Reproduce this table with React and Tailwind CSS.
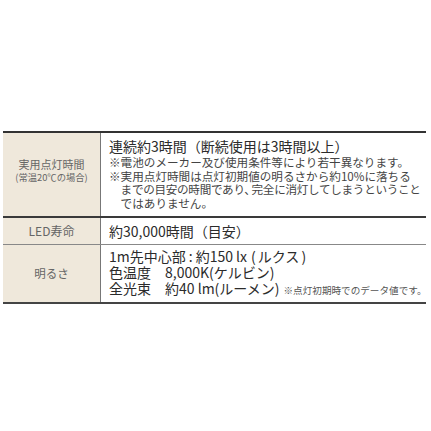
export default function App() {
  const jp = { fontFamily: '"Noto Sans CJK JP", "Noto Sans", sans-serif' };
  return (
    <div className="w-[431px] h-[431px] bg-white pt-[131px] pl-[3px]" style={jp}>
      <div className="w-[423px] border-t-2 border-b-2 border-t-[#333] border-b-[#444]">
        {/* Row 1 */}
        <div className="flex h-[83px]">
          <div className="w-[98px] shrink-0 bg-[#efe8db] border-r border-[#777] flex flex-col items-center justify-center text-[#666] text-center">
            <div className="mb-[8px]">
              <div className="text-[11px] leading-[13px]">実用点灯時間</div>
              <div className="text-[9.3px] leading-[13px] whitespace-nowrap">(常温20℃の場合)</div>
            </div>
          </div>
          <div className="flex-1 pl-[8px] pt-[4px] text-[#2b2b2b]">
            <div className="text-[14px] leading-[18px] whitespace-nowrap">連続約3時間（断続使用は3時間以上）</div>
            <div className="text-[11.6px] leading-[13.5px] mt-[1px] text-[#444] whitespace-nowrap">
              <div>※電池のメーカー及び使用条件等により若干異なります。</div>
              <div>※実用点灯時間は点灯初期値の明るさから約10%に落ちる</div>
              <div className="pl-[11.6px] tracking-[-0.3px]">
                までの目安の時間であり<span className="-mr-[4px]">、</span>完全に消灯してしまうということ
              </div>
              <div className="pl-[11.6px]">ではありません。</div>
            </div>
          </div>
        </div>
        {/* Row 2 */}
        <div className="flex h-[28px] border-t-2 border-[#3a3a3a]">
          <div className="w-[98px] shrink-0 bg-[#efe8db] border-r border-[#777] flex items-center justify-center text-[#666] text-[12px]">
            LED寿命
          </div>
          <div className="flex-1 pl-[8px] flex items-center text-[14px] text-[#2b2b2b] whitespace-nowrap">
            約30,000時間（目安）
          </div>
        </div>
        {/* Row 3 */}
        <div className="flex h-[58px] border-t border-[#888]">
          <div className="w-[98px] shrink-0 bg-[#efe8db] border-r border-[#777] flex items-center justify-center text-[#666] text-[11.5px]">
            明るさ
          </div>
          <div className="flex-1 pl-[8px] pt-[3px] text-[14px] leading-[16px] text-[#2b2b2b] whitespace-nowrap">
            <div>
              1m先中心部<span className="mx-[3px]">:</span>約150 lx<span className="ml-[4px] mr-[2px]">(</span>ルクス<span className="ml-[2px]">)</span>
            </div>
            <div>色温度　8,000K(ケルビン)</div>
            <div className="flex items-baseline">
              <span>全光束　約40 lm(ルーメン)</span>
              <span className="text-[9.6px] text-[#555] ml-[4px]">※点灯初期時でのデータ値です。</span>
            </div>
          </div>
        </div>
      </div>
    </div>
  );
}
